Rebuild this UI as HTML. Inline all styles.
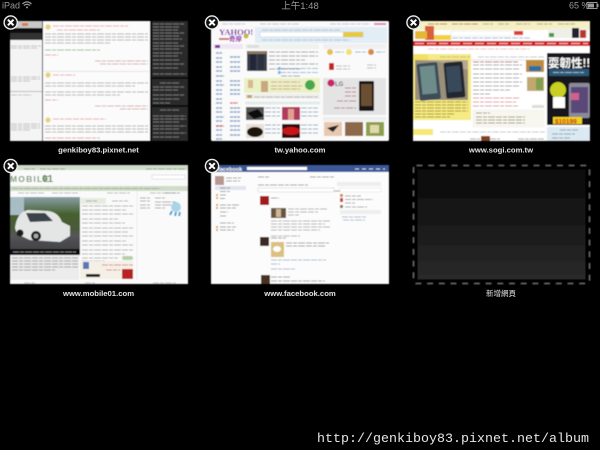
<!DOCTYPE html>
<html><head><meta charset="utf-8"><style>
html,body{margin:0;padding:0;background:#000;width:600px;height:450px;overflow:hidden}
svg{display:block}
text{font-family:"Liberation Sans","Noto Sans CJK TC",sans-serif}
.l{font-size:7.7px;font-weight:bold;fill:#e4e4e4;text-anchor:middle}
.s{font-size:9px;fill:#9a9a9a}
.t{fill:none;stroke-dasharray:6 1 4 1 7 1;stroke-width:.9;stroke-opacity:.55}
</style></head><body>
<svg width="600" height="450" viewBox="0 0 600 450" xmlns="http://www.w3.org/2000/svg">
<defs>
<filter id="b" x="-2%" y="-2%" width="104%" height="104%"><feGaussianBlur stdDeviation="0.5"/></filter>
<linearGradient id="g" x1="0" y1="0" x2="0" y2="1"><stop offset="0" stop-color="#090909"/><stop offset="1" stop-color="#2a2a2a"/></linearGradient>
<linearGradient id="road" x1="0" y1="0" x2="0" y2="1"><stop offset="0" stop-color="#8aa0a8"/><stop offset=".3" stop-color="#46602e"/><stop offset=".55" stop-color="#4a5a38"/><stop offset=".65" stop-color="#55565a"/><stop offset="1" stop-color="#3c3c40"/></linearGradient>
<g id="x"><circle r="6.6" fill="#111" stroke="#eee" stroke-width="1.4"/><path d="M-2.8-2.8L2.8 2.8M2.8-2.8L-2.8 2.8" stroke="#fff" stroke-width="2"/></g>
</defs>
<rect width="600" height="450" fill="#000"/>

<!-- status bar -->
<text x="2" y="8.5" class="s">iPad</text>
<path d="M22.5 4Q27-.2 31.5 4M24 5.6Q27 3 30 5.6" fill="none" stroke="#9a9a9a" stroke-width="1.2"/><circle cx="27" cy="7.4" r="1" fill="#9a9a9a"/>
<text x="300" y="9" class="s" text-anchor="middle" style="font-size:9.5px" fill="#aaa">上午1:48</text>
<text x="569" y="8.5" class="s">65 %</text>
<rect x="587" y="2.5" width="10" height="6" fill="none" stroke="#999" stroke-width="1"/><rect x="588" y="3.5" width="6" height="4" fill="#999"/><rect x="597.5" y="4" width="1" height="3" fill="#999"/>

<g filter="url(#b)">
<!-- card 1 -->
<rect x="10" y="21" width="178" height="120" fill="#111"/>
<rect x="10" y="21" width="32" height="7" fill="#c8c8c8"/><rect x="22" y="23" width="6" height="3" fill="#d97a40"/>
<rect x="10" y="33" width="32" height="7" fill="#333"/>
<rect x="10" y="40" width="32" height="101" fill="#f4f4f4"/>
<path d="M11 46H41M11 48H38M11 77H40M11 79H40M11 81H30M11 95H32M11 124H40M11 126H40M11 128H40M11 130H30" class="t" stroke="#999"/>
<rect x="10" y="91" width="32" height="1" fill="#bbb"/>
<rect x="43" y="21" width="107" height="120" fill="#fbfbfb"/>
<circle cx="48" cy="27" r="2.6" fill="#e8d278"/><circle cx="48" cy="75" r="2.6" fill="#e8d278"/><circle cx="48" cy="120" r="2.6" fill="#e8d278"/>
<path d="M53 26H128M57 30H100M53 75H75M53 119H106" class="t" stroke="#dc6a6a"/>
<path d="M45 34H148M45 37H148M45 40H148M45 43H110M45 83H148M45 86H135M45 92H148M45 95H120M45 126H148M45 129H148M45 132H148" class="t" stroke="#777"/>
<path d="M45 50H100" class="t" stroke="#2a9a2a"/>
<path d="M45 55H58M45 100H58M45 138H100" class="t" stroke="#d86060"/>
<path d="M95 61H148M100 64H148M95 106H148M120 109H148" class="t" stroke="#b57070"/>
<rect x="44" y="71" width="105" height=".7" fill="#ddd"/>
<rect x="152" y="21" width="36" height="56" fill="#2c2c2c"/><rect x="152" y="79" width="36" height="26" fill="#2c2c2c"/><rect x="152" y="107" width="36" height="34" fill="#2c2c2c"/>
<path d="M153 24H185M153 27H180M153 30H178M153 33H184M153 36H180M153 39H182M153 43H178M153 46H184M153 49H180M153 53H182M153 56H178M153 60H180M153 64H184M153 68H178M153 74H186M153 87H184M153 90H178M153 95H184M153 99H180M153 103H170M160 83H180M160 110H180M153 116H186M153 119H186M153 122H180M153 126H186M153 129H180M153 133H186M153 137H180" class="t" stroke="#aaa"/>

<!-- card 2 -->
<rect x="211" y="21" width="178" height="120" rx="1.5" fill="#fafafa"/>
<rect x="255" y="27" width="132" height="16" fill="#e2edf6"/>
<rect x="260" y="32" width="103" height="5" fill="#fff" stroke="#b9c8d6" stroke-width=".5"/><rect x="343" y="32" width="20" height="5" fill="#e8c83c"/>
<path d="M222 24H245M260 24H300M330 24H370M262 30H340M262 40H350" class="t" stroke="#8a9ab0"/>
<rect x="374" y="23" width="12" height="2" fill="#d88ab8"/>
<text x="219" y="35" style="font-size:8.5px;font-weight:bold;font-family:'Liberation Serif',serif" fill="#7b1fa2">YAHOO!</text>
<text x="229" y="41" style="font-size:6.5px;font-weight:bold" fill="#8e24aa">奇摩</text>
<circle cx="246" cy="36" r="2.5" fill="#c4b840"/><rect x="219" y="38" width="10" height="2" fill="#d07070"/>
<rect x="213" y="44" width="30" height="5" fill="#efe6f3"/><rect x="215" y="45" width="5" height="3" fill="#7b3a9c"/>
<path d="M216 53H222M216 58H222M216 62H222M216 67H222M216 71H222M216 76H224M216 81H222M216 85H224M216 90H222M216 94H222M216 99H222M216 103H222M216 108H222M216 112H222M216 117H224M216 121H222M216 126H222M216 130H222M216 135H222M216 139H222" stroke="#3668a8" stroke-opacity=".6" stroke-width="1.5" stroke-dasharray="3 .6" fill="none"/>
<path d="M230 57H240M230 62H240M230 67H240M230 71H240M230 81H240M230 85H240M230 90H240M230 94H240M230 108H240M230 112H240M230 117H240M230 121H240M230 126H240M230 130H240M230 135H240" stroke="#3668a8" stroke-opacity=".6" stroke-width="1.5" stroke-dasharray="3 .6" fill="none"/>
<path d="M216 126H224M230 103H238" stroke="#d84040" stroke-opacity=".7" stroke-width="1.5" stroke-dasharray="3 .6"/>
<rect x="245" y="44" width="74" height="5" fill="#eef3ee"/><rect x="247" y="45" width="12" height="3" fill="#ddd"/>
<rect x="247" y="51" width="20" height="20" fill="#3a3c48"/><rect x="250" y="53" width="6" height="17" fill="#232838"/><rect x="258" y="54" width="6" height="16" fill="#2c3040"/><rect x="248" y="51" width="18" height="3" fill="#8c7860"/>
<path d="M269 52H318M269 56H318M269 60H305M269 64H318M269 69H300M281 76H300" class="t" stroke="#555"/>
<path d="M280 68.5H318M280 72.5H318" class="t" stroke="#4a82b8"/>
<rect x="278" y="67" width="2.5" height="3" fill="#7ab4d8"/><rect x="278" y="71" width="2.5" height="3" fill="#7ab4d8"/>
<rect x="244" y="78" width="76" height="15" fill="#eaf1c4"/><rect x="261" y="81" width="7" height="11" fill="#c9a880"/><rect x="248" y="80" width="5" height="8" fill="#d8b890"/>
<circle cx="310" cy="85" r="5" fill="#4aa84a"/><path d="M271 82H300M271 86H302M271 89H300" class="t" stroke="#c06060"/>
<rect x="245" y="94" width="75" height="5" fill="#eee"/><rect x="247" y="95" width="5" height="3" fill="#c8a060"/><path d="M254 97H318" class="t" stroke="#888"/>
<path d="M245 103H320" stroke="#e2ebe6" stroke-width="3"/>
<rect x="246" y="107" width="18" height="13" fill="#555"/><path d="M247 113L258 109 264 116 254 119Z" fill="#111"/>
<rect x="282" y="107" width="18" height="13" fill="#b03a5c"/><rect x="288" y="109" width="6" height="11" fill="#e0a090"/>
<rect x="246" y="124" width="18" height="14" fill="#e8e0d8"/><ellipse cx="255" cy="132" rx="8" ry="5" fill="#1c1410"/>
<rect x="282" y="124" width="18" height="14" fill="#301010"/><ellipse cx="291" cy="131" rx="9" ry="4" fill="#c81818"/>
<path d="M265 108H280M265 112H280M265 116H280M301 108H318M301 112H318M301 116H318M265 125H280M265 129H280M265 133H280M301 125H318M301 129H318M301 133H318" class="t" stroke="#4a6a9a"/>
<rect x="323" y="44" width="63" height="5" fill="#f0f0f0"/>
<circle cx="330" cy="52" r="3" fill="#e8c050"/><circle cx="349" cy="52" r="3" fill="#f2e070"/><circle cx="371" cy="52" r="3" fill="#d88a40"/>
<path d="M335 52H344M355 52H366M376 52H385" class="t" stroke="#4a82b8"/>
<rect x="329" y="63" width="5" height="7" fill="#c82020"/><path d="M336 66H350M336 69H350M367 65H376M367 68H376" class="t" stroke="#888"/>
<rect x="323" y="78" width="63" height="37" fill="#e4e4e4"/><circle cx="331" cy="83" r="3.6" fill="#c8286a"/><text x="335" y="86" style="font-size:6px;font-weight:bold" fill="#666">LG</text>
<rect x="359" y="81" width="15" height="30" rx="1" fill="#151515"/><rect x="361" y="84" width="11" height="22" fill="#6a5030"/>
<path d="M345 88H356M345 92H356M345 96H356M337 101H356M334 108H356" class="t" stroke="#a03050"/>
<rect x="323" y="117" width="63" height="4" fill="#eee"/>
<rect x="324" y="122" width="18" height="14" fill="#e8c8b0"/><path d="M327 128L339 125 333 132Z" fill="#222"/>
<rect x="345" y="122" width="18" height="14" fill="#8c6a48"/><rect x="366" y="122" width="18" height="14" fill="#8ca04a"/><rect x="370" y="125" width="9" height="8" fill="#e2d8b0"/>

<!-- card 3 -->
<rect x="413" y="21" width="177" height="120" fill="#fff"/>
<rect x="413" y="21" width="177" height="9" fill="#f5efc2"/>
<path d="M428 24H447M452 24H478M483 24H493M498 24H510M516 24H530M537 24H552M558 24H575" class="t" stroke="#707060"/>
<path d="M428 24H447M452 24H478" class="t" stroke="#d85040"/>
<rect x="425" y="26" width="9" height="14" fill="#d8603a"/><rect x="415" y="31" width="12" height="8" fill="#e4b830"/><rect x="434" y="35" width="17" height="5" fill="#f2d040"/>
<rect x="451" y="31" width="72" height="5" fill="#fff" stroke="#ddd" stroke-width=".5"/><rect x="514" y="31" width="9" height="4" fill="#e03a30"/>
<path d="M452 38H530" class="t" stroke="#4a82b8"/>
<rect x="548" y="28" width="40" height="10" fill="#eef0e8"/><rect x="572" y="28" width="7" height="10" fill="#223"/><rect x="580" y="30" width="6" height="8" fill="#c03030"/><rect x="549" y="33" width="5" height="4" fill="#4a9a4a"/>
<rect x="413" y="41" width="177" height="5" fill="#d11414"/><path d="M415 43.5H588" stroke="#f6c0c0" stroke-width=".9" stroke-dasharray="9 3"/>
<path d="M428 49H530" class="t" stroke="#e58a8a"/>
<rect x="413" y="54" width="58" height="66" fill="#f6ea82"/>
<rect x="414" y="54" width="14" height="6" fill="#f2e060"/><path d="M440 57H470M478 57H545" class="t" stroke="#999"/>
<path d="M471 60H545" stroke="#dadada" stroke-width=".7"/>
<rect x="415" y="60" width="53" height="40" fill="#9a907a"/>
<path d="M415 60H468V70L440 62Z" fill="#b8a890"/>
<rect x="418" y="63" width="21" height="37" rx="2" transform="rotate(-6 428 80)" fill="#3c4c5a"/><rect x="421" y="66" width="15" height="28" transform="rotate(-6 428 80)" fill="#6e8c8a"/>
<rect x="445" y="62" width="19" height="36" rx="2" transform="rotate(-5 454 80)" fill="#20262e"/><rect x="447" y="66" width="14" height="26" transform="rotate(-5 454 80)" fill="#38485a"/>
<path d="M415 102H468M415 105H468M415 108H468M415 111H468M415 114H455M415 117H450" class="t" stroke="#665a10"/>
<path d="M473 62H518M473 65H522M473 69H520M473 74H522M473 78H520M473 82H522M473 86H520M473 90H510M473 94H490" class="t" stroke="#555"/>
<path d="M473 62H518M473 98H520M473 102H516M473 106H518" class="t" stroke="#c84040"/>
<rect x="526" y="60" width="18" height="12" fill="#c08a3a"/><rect x="529" y="66" width="12" height="5" fill="#2a70a0"/><rect x="527" y="77" width="17" height="14" fill="#c0a870"/><rect x="536" y="78" width="7" height="12" fill="#80a050"/>
<rect x="532" y="105" width="12" height="3" fill="#ddd"/><rect x="532" y="123" width="12" height="3" fill="#ddd"/>
<rect x="473" y="110" width="71" height="17" fill="#f7f7f0" stroke="#eee" stroke-width=".5"/>
<path d="M476 113H490M476 117H525M476 120H525M476 123H525" class="t" stroke="#665a30"/>
<rect x="547" y="53" width="43" height="72" fill="#16181e"/>
<text x="548" y="67" style="font-size:11.5px;font-weight:bold" fill="#fff">耍韌性!!</text>
<rect x="549" y="69" width="40" height="7" fill="#2a5878"/><path d="M553 72.5H585" class="t" stroke="#fff"/>
<circle cx="558" cy="90" r="8" fill="#c8d020"/><rect x="553" y="97" width="12" height="11" fill="#fff"/><rect x="569" y="83" width="21" height="35" rx="2" fill="#8a8a98"/><rect x="571" y="87" width="17" height="26" fill="#5a4a78"/><rect x="571" y="93" width="8" height="7" fill="#d06090"/>
<rect x="553" y="117" width="29" height="7" fill="#f0d020"/><text x="555" y="123.5" style="font-size:6.5px;font-weight:bold" fill="#c81818">$10199</text>
<rect x="413" y="129" width="20" height="6" fill="#f6e872"/><path d="M440 132H545" class="t" stroke="#999"/>
<path d="M470 139H480M490 139H500M518 139H545" class="t" stroke="#555"/><rect x="481" y="136" width="9" height="5" fill="#804020"/>
<rect x="547" y="127" width="43" height="14" fill="#dbe9f2"/><path d="M560 130H578M552 134H575M552 138H570" class="t" stroke="#4a6a80"/>

<!-- card 4 -->
<rect x="10" y="165" width="178" height="119" fill="#fafafa"/>
<rect x="10" y="165" width="178" height="5" fill="#cfdcc8"/><path d="M24 169H36M40 169H65M146 169H185" class="t" stroke="#667a60"/>
<text x="10" y="182" style="font-size:8.5px;font-weight:bold;letter-spacing:1.2px" fill="#7c9a76">MOBILE</text><text x="42" y="182" style="font-size:10px;font-weight:bold" fill="#5e8a50">01</text>
<rect x="152" y="175" width="33" height="4" fill="#fff" stroke="#ccc" stroke-width=".5"/>
<rect x="10" y="186" width="178" height="5" fill="#d0dcc8"/><path d="M12 188.5H160" class="t" stroke="#7a8a70"/>
<path d="M18 193H45M52 193H78M107 193H130M150 193H178M12 198H25" class="t" stroke="#888"/>
<rect x="10" y="197" width="70" height="58" fill="url(#road)"/>
<rect x="10" y="197" width="14" height="18" fill="#a8bcc4"/>
<path d="M15 228Q17 212 28 210L48 211Q58 212 62 222L70 226V236L60 242 30 240 17 234Z" fill="#e4e6e6"/>
<path d="M26 213L45 213 53 221 30 222Z" fill="#3a4248"/>
<circle cx="36" cy="236" r="5" fill="#1a1a1a"/><circle cx="36" cy="236" r="2.4" fill="#aaa"/><circle cx="20" cy="233" r="3.5" fill="#1a1a1a"/>
<rect x="10" y="249" width="70" height="6" fill="#111"/><path d="M13 252H76" class="t" stroke="#ddd"/>
<rect x="10" y="255" width="69" height="25" fill="#ececec"/><path d="M12 258H78M12 261H78M12 264H78M12 267H78M12 270H55" class="t" stroke="#666"/>
<rect x="81" y="198" width="25" height="6" fill="#e6ede0"/><path d="M86 201H98M112 201H128" class="t" stroke="#777"/>
<path d="M82 206H133M82 210H126M82 214H133M82 219H118M82 223H125M82 228H133M82 232H128M82 236H133M82 241H126M82 245H133M82 250H133M82 254H125M82 258H118M82 261H105" class="t" stroke="#777"/>
<rect x="122" y="256" width="11" height="4" rx="2" fill="#b8d0a8"/>
<rect x="80" y="261" width="53" height="18" fill="#f5f0e6"/><rect x="83" y="262" width="6" height="7" fill="#5a78b8"/><rect x="86" y="274" width="14" height="3" fill="#222"/><rect x="122" y="269" width="11" height="10" fill="#b82020"/><path d="M102 265H133M106 270H120" class="t" stroke="#c04848"/>
<path d="M137 191V280" stroke="#eee"/>
<path d="M140 198H150M155 198H165M165 193H180M140 201H150M155 202H165M165 202H176M140 205H150M155 205H165M140 208H150M155 208H165M165 205H176" class="t" stroke="#666"/>
<circle cx="176" cy="207" r="5" fill="#a8d4e8"/><path d="M172 211L170 215M176 212L175 216M180 212L179 216" stroke="#4aa0d0" stroke-width="2"/>
<path d="M24 283H35M85 283H95M153 283H176" class="t" stroke="#888"/>

<!-- card 5 -->
<rect x="211" y="165" width="178" height="119" fill="#fcfcfc"/>
<rect x="211" y="165" width="178" height="7" fill="#3b5998"/>
<rect x="247" y="167" width="60" height="3" fill="#fff"/><text x="218" y="171" style="font-size:5.5px;font-weight:bold" fill="#fff">facebook</text>
<path d="M355 169H385" stroke="#c9d4ea" stroke-dasharray="4 3"/>
<rect x="215" y="176" width="9" height="9" fill="#b69890"/><path d="M226 178H241M226 181H240" class="t" stroke="#555"/>
<rect x="215" y="186" width="31" height="4" fill="#dfe4ee"/>
<path d="M220 188H230M220 191.500H230M220 195H226M220 198.500H225M220 205H240M220 208H236M220 212H228M220 216H227M220 223H234M220 227H236M220 230H234" class="t" stroke="#555"/>
<path d="M216 195H218M216 198H218M216 205H218M216 208H218M216 227H218M216 230H218" stroke="#e4a020" stroke-width="2"/>
<path d="M258 177H270M310 177H334M258 185H308M262 191H340" class="t" stroke="#555"/>
<rect x="258" y="188" width="76" height="4" fill="#fff" stroke="#ccc" stroke-width=".5"/>
<rect x="260" y="196" width="9" height="9" fill="#a01c1c"/>
<path d="M271 198H279" class="t" stroke="#3b5998"/>
<rect x="271" y="208" width="15" height="10" fill="#6a5440"/><rect x="276" y="209" width="5" height="8" fill="#ccb898"/>
<path d="M288 209H328M288 212H318M288 215H300M271 221H330M271 224H325M271 227H330M271 230H320M271 236H300" class="t" stroke="#777"/>
<rect x="260" y="237" width="9" height="9" fill="#3a2c20"/><path d="M271 238H286M286 243H329M286 246H325" class="t" stroke="#555"/>
<rect x="271" y="242" width="13" height="15" fill="#dcc080"/><ellipse cx="277" cy="249" rx="4" ry="3" fill="#fff"/>
<path d="M271 260H326M271 264H280M271 269H295" class="t" stroke="#6a7ea8"/>
<rect x="261" y="275" width="9" height="9" fill="#4a3020"/><path d="M271 277H290M271 281H325" class="t" stroke="#555"/>
<rect x="337" y="182" width="44" height="4" fill="#eee"/><rect x="340" y="188" width="41" height="4" fill="#fff" stroke="#ddd" stroke-width=".5"/>
<rect x="340" y="194" width="3" height="3" fill="#d08a60"/><rect x="340" y="198" width="3" height="4" fill="#c04040"/><rect x="340" y="205" width="3" height="3" fill="#9a7060"/>
<path d="M345 196H361M345 199.500H373M345 203H355M345 207H367" class="t" stroke="#666"/>
<rect x="340" y="210" width="41" height="4" fill="#eee"/><path d="M342 217H366M343 220H365" class="t" stroke="#6a7ea8"/>

<!-- card 6 -->
<rect x="417.500" y="169.500" width="168" height="110" fill="url(#g)"/>
<rect x="413.500" y="165.500" width="176" height="118" rx="3" fill="none" stroke="#666" stroke-width="1.8" stroke-dasharray="6 5.700"/>
</g>

<!-- close buttons -->
<use href="#x" x="10.700" y="22.500"/>
<use href="#x" x="212" y="22.500"/>
<use href="#x" x="413.500" y="22.500"/>
<use href="#x" x="10.700" y="166"/>
<use href="#x" x="212" y="166"/>

<!-- labels -->
<text x="98.500" y="152.500" class="l">genkiboy83.pixnet.net</text>
<text x="300" y="152.500" class="l">tw.yahoo.com</text>
<text x="501" y="152.500" class="l">www.sogi.com.tw</text>
<text x="98.500" y="296" class="l">www.mobile01.com</text>
<text x="300" y="296" class="l">www.facebook.com</text>
<text x="501" y="296" class="l" style="font-weight:normal;font-size:7.5px" fill="#ccc">新增網頁</text>

<text x="317" y="442" style="font-family:'Liberation Mono',monospace;font-size:13.330px" fill="#e6e6e6">http://genkiboy83.pixnet.net/album</text>
</svg>
</body></html>
